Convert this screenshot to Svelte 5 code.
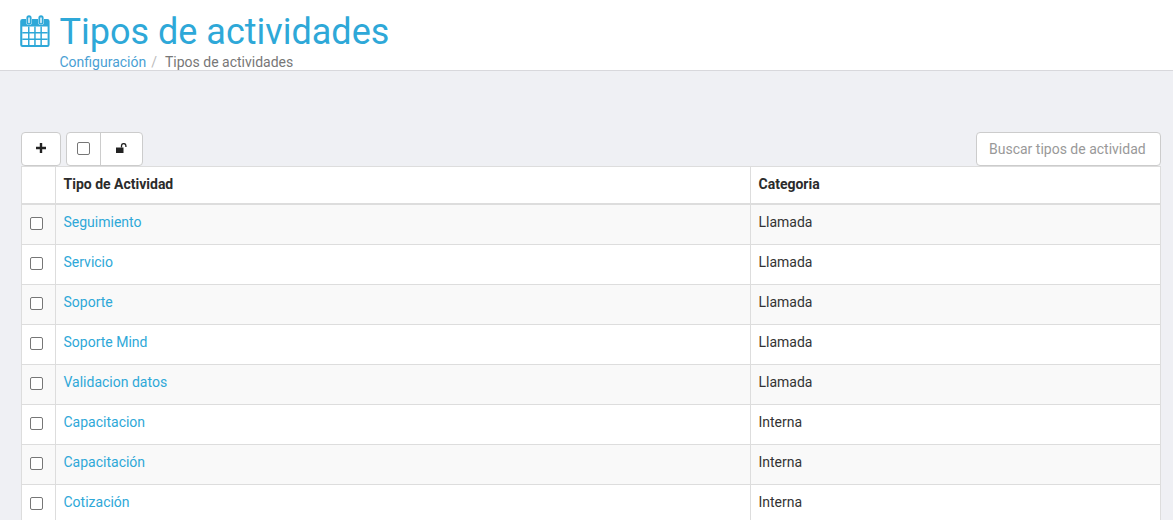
<script>
	const rows = [
		{ name: "Seguimiento", category: "Llamada" },
		{ name: "Servicio", category: "Llamada" },
		{ name: "Soporte", category: "Llamada" },
		{ name: "Soporte Mind", category: "Llamada" },
		{ name: "Validacion datos", category: "Llamada" },
		{ name: "Capacitacion", category: "Interna" },
		{ name: "Capacitación", category: "Interna" },
		{ name: "Cotización", category: "Interna" },
	];
</script>

<div class="page">
	<header class="pageHeader">
		<svg class="calendar" viewBox="0 0 30 32" width="30" height="32" aria-hidden="true">
			<path
				fill="#2ea8d8"
				fill-rule="evenodd"
				d="M2.500 4h3.500v3a3 3 0 0 0 6 0V4h6v3a3 3 0 0 0 6 0V4h3.300a2.300 2.300 0 0 1 2.300 2.300v23.400a2.300 2.300 0 0 1-2.300 2.300H2.500a2.300 2.300 0 0 1-2.300-2.300V6.300A2.300 2.300 0 0 1 2.500 4zM2.300 11.500V30h25.300V11.500z"
			/>
			<path
				fill="#2ea8d8"
				fill-rule="evenodd"
				d="M9 .2a2.600 2.600 0 0 1 2.600 2.600v4.300a2.600 2.600 0 0 1-5.200 0V2.800A2.600 2.600 0 0 1 9 .2zM8.300 2.500v5a.7.7 0 0 0 1.400 0v-5zM21 .2a2.600 2.600 0 0 1 2.600 2.600v4.300a2.600 2.600 0 0 1-5.200 0V2.800A2.600 2.600 0 0 1 21 .2zM20.300 2.500v5a.7.7 0 0 0 1.400 0v-5z"
			/>
			<path
				fill="#2ea8d8"
				d="M8 11.500h1.500V30H8zM14.200 11.500h1.500V30h-1.500zM20.400 11.500h1.500V30h-1.500zM2.300 17h25.300v1.500H2.300zM2.300 23.500h25.300v1.500H2.300z"
			/>
		</svg>
		<div class="titles">
			<h1>Tipos de actividades</h1>
			<nav class="breadcrumb">
				<a href="#config">Configuración</a>
				<span class="sep">/</span>
				<span class="current">Tipos de actividades</span>
			</nav>
		</div>
	</header>

	<main class="content">
		<div class="toolbar">
			<div class="btnGroup">
				<button class="btn addBtn" aria-label="Agregar">
					<svg viewBox="0 0 10 10" width="10" height="10" aria-hidden="true">
						<path fill="#222" d="M3.800 0h2.400v3.800H10v2.400H6.200V10H3.800V6.200H0V3.800h3.800z" />
					</svg>
				</button>
			</div>
			<div class="btnGroup">
				<button class="btn checkBtn" aria-label="Seleccionar"><span class="box"></span></button>
				<button class="btn lockBtn" aria-label="Desbloquear">
					<svg viewBox="0 0 12 10" width="12" height="10" aria-hidden="true">
						<path fill="#222" d="M0 4.500h7.500V10H0z" />
						<path fill="none" stroke="#222" stroke-width="1.300" d="M5.500 4.500V2.800a2.200 2.200 0 0 1 4.400 0v1.200" />
					</svg>
				</button>
			</div>
			<input class="search" type="text" placeholder="Buscar tipos de actividad" />
		</div>

		<table>
			<thead>
				<tr>
					<th class="checkCol"></th>
					<th class="nameCol">Tipo de Actividad</th>
					<th>Categoria</th>
				</tr>
			</thead>
			<tbody>
				{#each rows as row}
					<tr>
						<td class="checkCol"><span class="box"></span></td>
						<td><a href="#row">{row.name}</a></td>
						<td>{row.category}</td>
					</tr>
				{/each}
			</tbody>
		</table>
	</main>
</div>

<style>
	:global(body) {
		margin: 0;
		background: #eff0f4;
		font-family: Roboto, "Liberation Sans", sans-serif;
		font-size: 14px;
		color: #333;
	}

	.page {
		height: 520px;
		overflow: hidden;
	}

	.pageHeader {
		display: flex;
		align-items: flex-start;
		gap: 9.5px;
		height: 70px;
		padding: 0 0 0 20px;
		background: #fff;
		border-bottom: 1px solid #d8d8dc;
	}

	.calendar {
		margin-top: 15px;
	}

	h1 {
		margin: 0;
		padding-top: 11px;
		font-size: 36px;
		font-weight: 400;
		line-height: 42px;
		color: #2ea8d8;
	}

	.breadcrumb {
		display: flex;
		line-height: 18px;
		color: #777;
	}

	.breadcrumb a {
		color: #4a9fd4;
		text-decoration: none;
	}

	.sep {
		margin: 0 8px 0 5px;
		color: #bbb;
	}

	.content {
		padding: 61px 12px 0 21px;
	}

	.toolbar {
		display: flex;
		gap: 5px;
		height: 34px;
	}

	.btnGroup {
		display: flex;
		height: 34px;
		border: 1px solid #ccc;
		border-radius: 4px;
		background: #fff;
		box-sizing: border-box;
	}

	.btn {
		display: flex;
		align-items: center;
		justify-content: center;
		padding: 0 0 2px;
		border: none;
		background: none;
		cursor: pointer;
	}

	.addBtn {
		width: 38px;
	}

	.checkBtn {
		width: 34px;
		border-right: 1px solid #ccc;
	}

	.lockBtn {
		width: 41px;
	}

	.box {
		display: block;
		width: 11px;
		height: 11px;
		border: 1px solid #767676;
		border-radius: 2px;
		background: #fff;
	}

	.search {
		margin-left: auto;
		width: 185px;
		height: 34px;
		box-sizing: border-box;
		padding: 0 12px;
		border: 1px solid #ccc;
		border-radius: 4px;
		background: #fff;
		font: inherit;
	}

	.search::placeholder {
		color: #999;
		opacity: 1;
	}

	table {
		width: 1140px;
		table-layout: fixed;
		border-collapse: collapse;
		background: #fff;
	}

	th,
	td {
		box-sizing: border-box;
		padding: 0 7.5px 5px;
		border: 1px solid #ddd;
		text-align: left;
		line-height: 20px;
		color: #333;
	}

	th {
		height: 37px;
		padding-bottom: 1px;
		border-bottom: 2px solid #ddd;
		font-weight: 700;
		color: #2b2b2b;
	}

	td {
		height: 40px;
	}

	tbody tr:first-child td {
		height: 41px;
		padding-top: 1px;
	}

	tbody tr:nth-child(odd) {
		background: #f9f9f9;
	}

	.checkCol {
		width: 34px;
		padding: 0 0 2px 8px;
	}

	.nameCol {
		width: 695px;
	}

	td a {
		color: #2ea8d8;
		text-decoration: none;
	}
</style>
